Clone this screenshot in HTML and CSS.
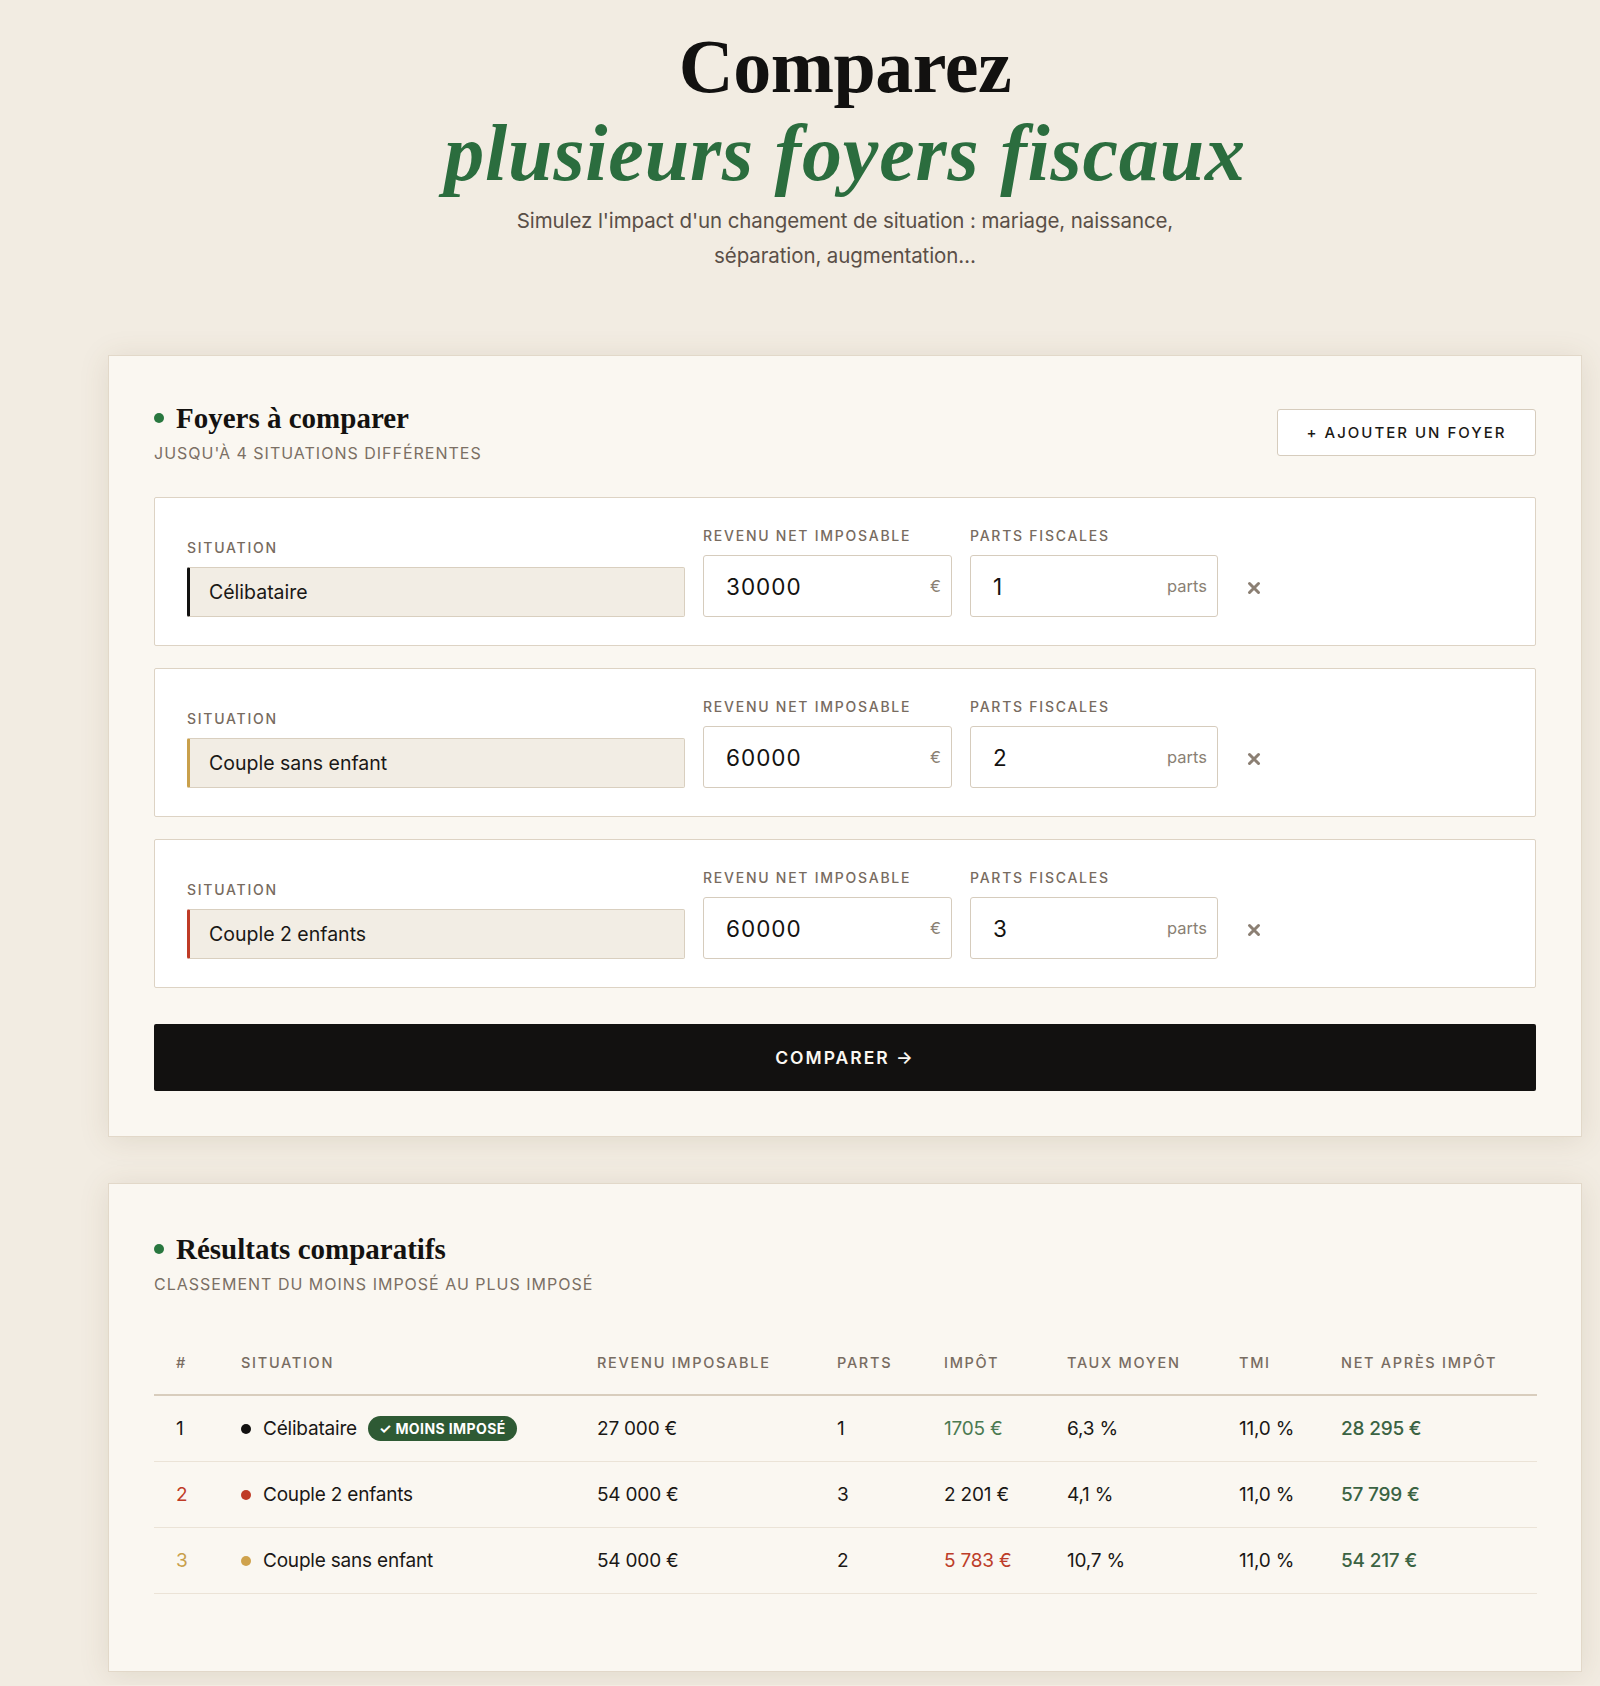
FILE: index.html
```html
<!DOCTYPE html>
<html lang="fr">
<head>
<meta charset="utf-8">
<title>Comparateur de foyers fiscaux</title>
<link rel="stylesheet" href="styles.css">
</head>
<body>
<div class="page">
  <header class="hero">
    <h1>
      <span class="hero-line">Comparez</span>
      <span class="hero-accent">plusieurs foyers fiscaux</span>
    </h1>
    <p class="hero-lead">Simulez l'impact d'un changement de situation : mariage, naissance,<br>séparation, augmentation…</p>
  </header>

  <section class="card">
    <div class="card-head">
      <div class="card-titles">
        <h2 class="card-title"><span class="dot dot-green"></span>Foyers à comparer</h2>
        <p class="card-sub">Jusqu'à 4 situations différentes</p>
      </div>
      <button class="btn-outline" type="button">+ Ajouter un foyer</button>
    </div>

    <div class="households">
      <div class="household">
        <div class="field">
          <span class="field-label">Situation</span>
          <div class="select select-black">Célibataire</div>
        </div>
        <div class="field">
          <span class="field-label">Revenu net imposable</span>
          <div class="input"><span class="input-value">30000</span><span class="input-unit">€</span></div>
        </div>
        <div class="field">
          <span class="field-label">Parts fiscales</span>
          <div class="input"><span class="input-value">1</span><span class="input-unit">parts</span></div>
        </div>
        <div class="remove">
          <svg width="14" height="14" viewBox="0 0 14 14"><path d="M2.5 2.5 L11.5 11.5 M11.5 2.5 L2.5 11.5" stroke="#8b7f73" stroke-width="3" stroke-linecap="round"/></svg>
        </div>
      </div>

      <div class="household">
        <div class="field">
          <span class="field-label">Situation</span>
          <div class="select select-gold">Couple sans enfant</div>
        </div>
        <div class="field">
          <span class="field-label">Revenu net imposable</span>
          <div class="input"><span class="input-value">60000</span><span class="input-unit">€</span></div>
        </div>
        <div class="field">
          <span class="field-label">Parts fiscales</span>
          <div class="input"><span class="input-value">2</span><span class="input-unit">parts</span></div>
        </div>
        <div class="remove">
          <svg width="14" height="14" viewBox="0 0 14 14"><path d="M2.5 2.5 L11.5 11.5 M11.5 2.5 L2.5 11.5" stroke="#8b7f73" stroke-width="3" stroke-linecap="round"/></svg>
        </div>
      </div>

      <div class="household">
        <div class="field">
          <span class="field-label">Situation</span>
          <div class="select select-red">Couple 2 enfants</div>
        </div>
        <div class="field">
          <span class="field-label">Revenu net imposable</span>
          <div class="input"><span class="input-value">60000</span><span class="input-unit">€</span></div>
        </div>
        <div class="field">
          <span class="field-label">Parts fiscales</span>
          <div class="input"><span class="input-value">3</span><span class="input-unit">parts</span></div>
        </div>
        <div class="remove">
          <svg width="14" height="14" viewBox="0 0 14 14"><path d="M2.5 2.5 L11.5 11.5 M11.5 2.5 L2.5 11.5" stroke="#8b7f73" stroke-width="3" stroke-linecap="round"/></svg>
        </div>
      </div>
    </div>

    <button class="btn-primary" type="button">Comparer →</button>
  </section>

  <section class="card card-results">
    <div class="card-titles">
      <h2 class="card-title"><span class="dot dot-green"></span>Résultats comparatifs</h2>
      <p class="card-sub">Classement du moins imposé au plus imposé</p>
    </div>

    <table class="results">
      <thead>
        <tr>
          <th class="col-rank">#</th>
          <th class="col-situation">Situation</th>
          <th class="col-income">Revenu imposable</th>
          <th class="col-parts">Parts</th>
          <th class="col-tax">Impôt</th>
          <th class="col-rate">Taux moyen</th>
          <th class="col-tmi">TMI</th>
          <th class="col-net">Net après impôt</th>
        </tr>
      </thead>
      <tbody>
        <tr>
          <td>1</td>
          <td><span class="who"><span class="dot dot-black"></span>Célibataire<span class="badge">✓ MOINS IMPOSÉ</span></span></td>
          <td>27 000 €</td>
          <td>1</td>
          <td class="tax-low">1705 €</td>
          <td>6,3 %</td>
          <td>11,0 %</td>
          <td class="net">28 295 €</td>
        </tr>
        <tr>
          <td class="rank-red">2</td>
          <td><span class="who"><span class="dot dot-red"></span>Couple 2 enfants</span></td>
          <td>54 000 €</td>
          <td>3</td>
          <td>2 201 €</td>
          <td>4,1 %</td>
          <td>11,0 %</td>
          <td class="net">57 799 €</td>
        </tr>
        <tr>
          <td class="rank-gold">3</td>
          <td><span class="who"><span class="dot dot-gold"></span>Couple sans enfant</span></td>
          <td>54 000 €</td>
          <td>2</td>
          <td class="tax-high">5 783 €</td>
          <td>10,7 %</td>
          <td>11,0 %</td>
          <td class="net">54 217 €</td>
        </tr>
      </tbody>
    </table>
  </section>
</div>
</body>
</html>
```
FILE: styles.css
```css
* { box-sizing: border-box; }

body {
  margin: 0;
  background: #f2ece2;
  font-family: Inter, "Noto Sans", sans-serif;
  color: #161412;
}

.page {
  width: 1474px;
  margin-left: 108px;
  padding: 24px 0 13px;
}

/* ---------- hero ---------- */
.hero { text-align: center; }

.hero h1 {
  margin: 0;
  font-family: "Liberation Serif", "Times New Roman", serif;
  font-weight: 700;
}

.hero-line {
  display: block;
  font-size: 76px;
  line-height: 85px;
  color: #121110;
  letter-spacing: -0.5px;
}

.hero-accent {
  display: block;
  font-size: 80px;
  line-height: 89px;
  font-style: italic;
  color: #2b6d3e;
  letter-spacing: 0.8px;
}

.hero-lead {
  margin: 5px 0 0;
  font-size: 20.5px;
  line-height: 35px;
  color: #5a4f47;
  letter-spacing: -0.1px;
}

/* ---------- cards ---------- */
.card {
  margin-top: 82px;
  background: #faf7f1;
  border: 1px solid #e2d8c9;
  box-shadow: 0 3px 28px rgba(110, 85, 50, 0.13);
  padding: 44px 45px 45px;
}

.card-results {
  margin-top: 46px;
  padding-top: 47px;
  padding-bottom: 77px;
}

.card-head {
  display: flex;
  justify-content: space-between;
  align-items: flex-start;
}

.card-title {
  margin: 0;
  display: flex;
  align-items: center;
  gap: 12px;
  font-family: "Liberation Serif", "Times New Roman", serif;
  font-size: 29px;
  line-height: 36px;
  font-weight: 700;
  color: #141210;
  letter-spacing: 0;
}

.card-sub {
  margin: 6px 0 0;
  font-size: 16px;
  line-height: 22px;
  letter-spacing: 1px;
  text-transform: uppercase;
  color: #7b6f64;
}

.dot {
  display: inline-block;
  width: 10px;
  height: 10px;
  border-radius: 50%;
  flex: none;
}
.dot-green { background: #28773f; }
.dot-black { background: #121110; }
.dot-red { background: #bf3b26; }
.dot-gold { background: #cfa24c; }

.btn-outline {
  margin-top: 9px;
  height: 47px;
  width: 259px;
  background: #fff;
  border: 1px solid #d6ccbd;
  border-radius: 3px;
  font-family: Inter, sans-serif;
  font-size: 15px;
  font-weight: 500;
  letter-spacing: 2px;
  text-transform: uppercase;
  color: #1b1916;
}

/* ---------- households ---------- */
.households {
  margin-top: 33px;
  display: flex;
  flex-direction: column;
  gap: 22px;
}

.household {
  display: grid;
  grid-template-columns: 498px 249px 248px 36px;
  column-gap: 18px;
  align-items: end;
  background: #fff;
  border: 1px solid #ddd3c4;
  border-radius: 2px;
  padding: 29px 32px 28px;
}

.field {
  display: flex;
  flex-direction: column;
}

.field-label {
  font-size: 14px;
  line-height: 18px;
  font-weight: 500;
  letter-spacing: 1.75px;
  text-transform: uppercase;
  color: #776b60;
  margin-bottom: 10px;
}

.select {
  height: 50px;
  display: flex;
  align-items: center;
  padding-left: 19px;
  background: #f2ede4;
  border: 1px solid #d9cfbf;
  border-left: 3px solid #121110;
  border-radius: 2px;
  font-size: 19.5px;
  color: #1a1816;
}
.select-gold { border-left-color: #c9a04b; }
.select-red { border-left-color: #bf3b26; }

.input {
  height: 62px;
  display: flex;
  align-items: center;
  justify-content: space-between;
  padding: 0 8px 0 22px;
  background: #fff;
  border: 1px solid #d6ccbd;
  border-radius: 3px;
}

.input-value {
  font-size: 22.5px;
  letter-spacing: 1px;
  color: #141210;
}

.input-unit {
  font-size: 16.5px;
  color: #8a7f74;
  padding-right: 2px;
}

.remove {
  height: 62px;
  display: flex;
  align-items: center;
  justify-content: center;
  padding-top: 4px;
}

/* ---------- compare button ---------- */
.btn-primary {
  margin-top: 36px;
  width: 100%;
  height: 67px;
  background: #121110;
  border: 0;
  border-radius: 2px;
  color: #fbf8f2;
  font-family: Inter, sans-serif;
  font-size: 17.5px;
  font-weight: 600;
  letter-spacing: 2px;
  text-transform: uppercase;
}

/* ---------- results table ---------- */
.results {
  margin-top: 45px;
  width: 100%;
  border-collapse: collapse;
  table-layout: fixed;
}

.results th {
  padding: 14px 22px 22px;
  text-align: left;
  font-size: 14.5px;
  line-height: 18px;
  font-weight: 500;
  letter-spacing: 1.7px;
  text-transform: uppercase;
  color: #786c61;
  border-bottom: 2px solid #d8cdbd;
}

.col-rank { width: 65px; }
.col-situation { width: 356px; }
.col-income { width: 240px; }
.col-parts { width: 107px; }
.col-tax { width: 123px; }
.col-rate { width: 172px; }
.col-tmi { width: 102px; }
.col-net { width: 218px; }

.results td {
  padding: 20px 22px;
  height: 66px;
  font-size: 19px;
  line-height: 24px;
  color: #1a1816;
  border-bottom: 1px solid #ebe3d7;
  white-space: nowrap;
  letter-spacing: -0.2px;
}

.who {
  display: flex;
  align-items: center;
  gap: 12px;
}

.badge {
  margin-left: -1px;
  height: 25px;
  display: inline-flex;
  align-items: center;
  padding: 0 11px;
  border-radius: 13px;
  background: #2e5a34;
  color: #fff;
  font-size: 14px;
  font-weight: 700;
  letter-spacing: 0.4px;
}

.rank-red { color: #bf3b26 !important; }
.rank-gold { color: #c9a04b !important; }
.tax-low { color: #4b7a52 !important; }
.tax-high { color: #bd3d29 !important; }
.net { color: #3b6343 !important; font-weight: 500; }
```
